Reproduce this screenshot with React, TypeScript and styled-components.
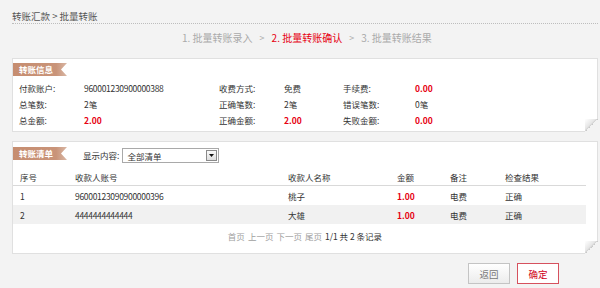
import React from "react";
import styled, { createGlobalStyle } from "styled-components";

const GlobalStyle = createGlobalStyle`
  html, body { margin: 0; padding: 0; }
  body {
    background: #f3f3f3;
    font-family: "Noto Sans CJK SC", "Liberation Sans", sans-serif;
    color: #333;
  }
`;

const Page = styled.div`
  width: 600px;
  height: 288px;
  box-sizing: border-box;
  padding: 0 2px 0 12px;
  overflow: hidden;
`;

const Breadcrumb = styled.div`
  padding-top: 10px;
  padding-bottom: 1px;
  line-height: 12px;
  font-size: 9.5px;
  color: #555;
  border-bottom: 1px dotted #bdbdbd;
`;

const Steps = styled.div`
  display: flex;
  align-items: center;
  gap: 7px;
  padding-left: 170px;
  margin-top: 8px;
  line-height: 12px;
  font-size: 10px;
  color: #aaa;
`;

const Step = styled.span<{ $active?: boolean }>`
  color: ${(p) => (p.$active ? "#e60012" : "#aaa")};
`;

const Sep = styled.span`
  color: #aaa;
  font-size: 9px;
`;

const Card = styled.div<{ $top: number }>`
  position: relative;
  margin-top: ${(p) => p.$top}px;
  background: #fff;
  border: 1px solid #e0e0e0;
  font-size: 8.5px;
  &::after {
    content: "";
    position: absolute;
    right: -1px;
    bottom: -1px;
    width: 13px;
    height: 13px;
    background: linear-gradient(
      135deg,
      #ffffff 0%,
      #e6e6e6 40%,
      #c9c9c9 50%,
      #f3f3f3 50%,
      #f3f3f3 100%
    );
  }
`;

const InfoCard = styled(Card)`
  padding: 4px 0 3px 0;
`;

const ListCard = styled(Card)`
  padding: 5px 0 10px 0;
`;

const Ribbon = styled.div`
  width: 54px;
  height: 13px;
  line-height: 13px;
  box-sizing: border-box;
  padding-left: 6px;
  font-size: 8.5px;
  font-weight: bold;
  color: #fff;
  background: linear-gradient(to right, #c68d70 0%, #c99479 80%, #d9b8a6 100%);
  clip-path: polygon(0 0, 100% 0, calc(100% - 6px) 50%, 100% 100%, 0 100%);
`;

const InfoGrid = styled.div`
  display: grid;
  grid-template-columns: 65px 135px 65px 59px 72px 1fr;
  padding-left: 6px;
  margin-top: 4px;
  line-height: 16px;
`;

const Cell = styled.span<{ $red?: boolean; $num?: boolean }>`
  color: ${(p) => (p.$red ? "#e60012" : "#333")};
  font-weight: ${(p) => (p.$red ? "bold" : "normal")};
  letter-spacing: ${(p) => (p.$num ? "-0.3px" : "0")};
  white-space: nowrap;
`;

const Toolbar = styled.div`
  display: flex;
  align-items: flex-start;
`;

const FilterLabel = styled.span`
  margin-left: 16px;
  margin-right: 3px;
  line-height: 15px;
  margin-top: 1px;
  color: #333;
`;

const SelectBox = styled.div`
  display: flex;
  align-items: center;
  justify-content: space-between;
  margin-top: 1px;
  width: 97px;
  height: 15px;
  box-sizing: border-box;
  border: 1px solid #a9a9a9;
  background: #fff;
  padding: 0 1px 0 4px;
  font-size: 8.5px;
`;

const SelectButton = styled.span`
  display: flex;
  align-items: center;
  justify-content: center;
  width: 11px;
  height: 11px;
  box-sizing: border-box;
  border: 1px solid #8a8a8a;
  background: linear-gradient(#fafafa, #dedede);
`;

const Table = styled.table`
  margin-top: 5px;
  width: 573px;
  border-collapse: collapse;
  table-layout: fixed;
  font-size: 8.5px;
`;

const Th = styled.th<{ $w?: number }>`
  width: ${(p) => (p.$w ? `${p.$w}px` : "auto")};
  height: 17px;
  padding: 0 0 0 7px;
  text-align: left;
  font-weight: normal;
  color: #333;
  border-bottom: 1px solid #d9d9d9;
`;

const Tr = styled.tr<{ $alt?: boolean }>`
  background: ${(p) => (p.$alt ? "#f1f1f1" : "#fff")};
`;

const Td = styled.td<{ $red?: boolean; $num?: boolean }>`
  height: 19px;
  padding: 0 0 0 7px;
  color: ${(p) => (p.$red ? "#e60012" : "#333")};
  font-weight: ${(p) => (p.$red ? "bold" : "normal")};
  letter-spacing: ${(p) => (p.$num ? "-0.3px" : "0")};
  white-space: nowrap;
`;

const Pager = styled.div`
  display: flex;
  justify-content: center;
  gap: 3px;
  margin-top: 5px;
  line-height: 14px;
  font-size: 8.5px;
`;

const PageLink = styled.span`
  color: #a0a0a0;
`;

const PageInfo = styled.span`
  color: #333;
`;

const Actions = styled.div`
  display: flex;
  justify-content: flex-end;
  gap: 7px;
  margin-top: 9px;
  padding-right: 39px;
`;

const Button = styled.button<{ $primary?: boolean }>`
  width: 42px;
  height: 21px;
  padding: 0;
  font-family: "Noto Sans CJK SC", sans-serif;
  font-size: 9.5px;
  cursor: pointer;
  border: 1px solid ${(p) => (p.$primary ? "#d6515e" : "#c4c4c4")};
  color: ${(p) => (p.$primary ? "#d0021b" : "#777")};
  background: ${(p) =>
    p.$primary ? "#fff" : "linear-gradient(#ffffff, #ececec)"};
`;

const rows = [
  { no: "1", acct: "96000123090900000396", name: "桃子", amt: "1.00", memo: "电费", res: "正确" },
  { no: "2", acct: "4444444444444", name: "大雄", amt: "1.00", memo: "电费", res: "正确" },
];

export default function App() {
  return (
    <>
      <GlobalStyle />
      <Page>
        <Breadcrumb>转账汇款 &gt; 批量转账</Breadcrumb>
        <Steps>
          <Step>1. 批量转账录入</Step>
          <Sep>&gt;</Sep>
          <Step $active>2. 批量转账确认</Step>
          <Sep>&gt;</Sep>
          <Step>3. 批量转账结果</Step>
        </Steps>

        <InfoCard $top={14}>
          <Ribbon>转账信息</Ribbon>
          <InfoGrid>
            <Cell>付款账户:</Cell>
            <Cell $num>960001230900000388</Cell>
            <Cell>收费方式:</Cell>
            <Cell>免费</Cell>
            <Cell>手续费:</Cell>
            <Cell $red>0.00</Cell>
            <Cell>总笔数:</Cell>
            <Cell>2笔</Cell>
            <Cell>正确笔数:</Cell>
            <Cell>2笔</Cell>
            <Cell>错误笔数:</Cell>
            <Cell>0笔</Cell>
            <Cell>总金额:</Cell>
            <Cell $red>2.00</Cell>
            <Cell>正确金额:</Cell>
            <Cell $red>2.00</Cell>
            <Cell>失败金额:</Cell>
            <Cell $red>0.00</Cell>
          </InfoGrid>
        </InfoCard>

        <ListCard $top={9}>
          <Toolbar>
            <Ribbon>转账清单</Ribbon>
            <FilterLabel>显示内容:</FilterLabel>
            <SelectBox>
              <span>全部清单</span>
              <SelectButton>
                <svg width="5" height="3" viewBox="0 0 5 3">
                  <path d="M0 0 H5 L2.5 3 Z" fill="#111" />
                </svg>
              </SelectButton>
            </SelectBox>
          </Toolbar>
          <Table>
            <thead>
              <tr>
                <Th $w={48}>序号</Th>
                <Th $w={206}>收款人账号</Th>
                <Th $w={102}>收款人名称</Th>
                <Th $w={46}>金额</Th>
                <Th $w={48}>备注</Th>
                <Th>检查结果</Th>
              </tr>
            </thead>
            <tbody>
              {rows.map((r, i) => (
                <Tr key={r.no} $alt={i % 2 === 1}>
                  <Td>{r.no}</Td>
                  <Td $num>{r.acct}</Td>
                  <Td>{r.name}</Td>
                  <Td $red>{r.amt}</Td>
                  <Td>{r.memo}</Td>
                  <Td>{r.res}</Td>
                </Tr>
              ))}
            </tbody>
          </Table>
          <Pager>
            <PageLink>首页</PageLink>
            <PageLink>上一页</PageLink>
            <PageLink>下一页</PageLink>
            <PageLink>尾页</PageLink>
            <PageInfo>1/1 共 2 条记录</PageInfo>
          </Pager>
        </ListCard>

        <Actions>
          <Button>返回</Button>
          <Button $primary>确定</Button>
        </Actions>
      </Page>
    </>
  );
}
